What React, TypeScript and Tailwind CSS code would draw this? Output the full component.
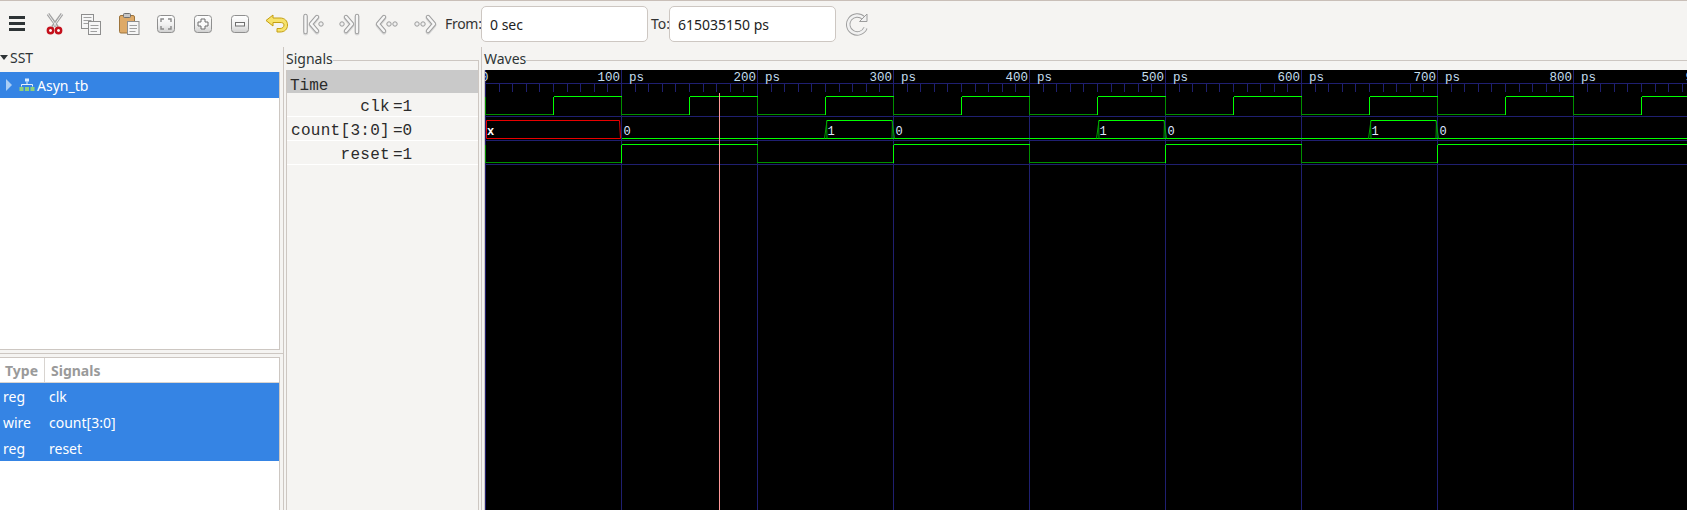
const ORIGIN = 0.5;
const PS100 = 136;
const X = (ps: number) => ORIGIN + (ps / 100) * PS100;

// local y inside the wave svg (global y - 70)
const rows = {
  clk: { hi: 26.5, lo: 44.5 },
  count: { hi: 50.5, lo: 68.5 },
  reset: { hi: 74.5, lo: 92.5 },
};

const LINE = "#1f1f70";
const HI = "#00ff00";
const LO = "#008f00";

function Bit({ start, edges, hi, lo }: { start: 0 | 1; edges: number[]; hi: number; lo: number }) {
  const stops = [0, ...edges, 900];
  return (
    <g shapeRendering="crispEdges">
      {stops.slice(0, -1).map((from, i) => {
        const level = i % 2 === 0 ? start : 1 - start;
        const x1 = X(from);
        const x2 = X(stops[i + 1]);
        return (
          <g key={from}>
            <line x1={x1} x2={x2} y1={level ? hi : lo} y2={level ? hi : lo} stroke={level ? HI : LO} />
            {i > 0 && <line x1={x1} x2={x1} y1={hi} y2={lo} stroke={level ? HI : LO} />}
          </g>
        );
      })}
      <line x1={X(0)} x2={X(0)} y1={hi} y2={lo} stroke={LO} />
    </g>
  );
}

function Pulse({ ps }: { ps: number }) {
  const a = X(ps);
  const b = X(ps + 50);
  const { hi, lo } = rows.count;
  return (
    <g>
      <path d={`M${a - 1} ${lo}L${a + 1.5} ${hi}M${a + 1.5} ${lo}L${a + 1} ${hi}`} stroke="#00a000" fill="none" />
      <path d={`M${b + 1} ${lo}L${b - 1.5} ${hi}M${b - 1.5} ${lo}L${b - 1} ${hi}`} stroke="#00a000" fill="none" />
      <line x1={a + 1.5} x2={b - 1.5} y1={hi} y2={hi} stroke={HI} shapeRendering="crispEdges" />
      <text x={a + 2} y={65} fontSize="12" fill="#dfe8ff" fontFamily="'Liberation Mono', monospace">1</text>
      <text x={b + 2} y={65} fontSize="12" fill="#dfe8ff" fontFamily="'Liberation Mono', monospace">0</text>
    </g>
  );
}

function WaveView() {
  const ticks = Array.from({ length: 90 }, (_, i) => i * 10);
  const hundreds = [100, 200, 300, 400, 500, 600, 700, 800, 900];
  return (
    <svg viewBox="0 0 1202 440" width="1202" height="440" className="block bg-black">
      <g shapeRendering="crispEdges">
        {[13.5, 46.5, 70.5, 94.5].map((y) => (
          <line key={y} x1="0" x2="1202" y1={y} y2={y} stroke={LINE} />
        ))}
        {ticks.map((t) => (
          <line key={t} x1={X(t)} x2={X(t)} y1={t % 100 === 0 ? 0 : 14} y2={t % 100 === 0 ? 440 : 22} stroke={LINE} />
        ))}
      </g>
      <g fontFamily="'Liberation Mono', monospace" fontSize="12.5" fill="#c4deee">
        <text x="-4" y="11">0</text>
        {hundreds.map((h) => (
          <g key={h}>
            <text x={X(h) - 1.5} y="11" textAnchor="end">{h}</text>
            <text x={X(h) + 7.5} y="11">ps</text>
          </g>
        ))}
      </g>

      <Bit start={0} hi={rows.clk.hi} lo={rows.clk.lo} edges={[50, 100, 150, 200, 250, 300, 350, 400, 450, 500, 550, 600, 650, 700, 750, 800, 850]} />

      <path d={`M${X(0) + 1} ${rows.count.hi}H${X(100) - 2}L${X(100) - 1} ${rows.count.lo}H${X(0) + 1}Z`} fill="none" stroke="#e80000" />
      <text x="2" y="65" fontSize="12" fontWeight="700" fill="#ffffff" fontFamily="'Liberation Mono', monospace">x</text>
      <line x1={X(100)} x2="1202" y1={rows.count.lo} y2={rows.count.lo} stroke={HI} shapeRendering="crispEdges" />
      <text x={X(100) + 2} y="65" fontSize="12" fill="#dfe8ff" fontFamily="'Liberation Mono', monospace">0</text>
      <Pulse ps={250} />
      <Pulse ps={450} />
      <Pulse ps={650} />

      <Bit start={0} hi={rows.reset.hi} lo={rows.reset.lo} edges={[100, 200, 300, 400, 500, 600, 700]} />

      <line x1="234.5" x2="234.5" y1="23" y2="440" stroke="#ff9a9a" shapeRendering="crispEdges" />
    </svg>
  );
}

function ToolIcon({ children }: { children: React.ReactNode }) {
  return (
    <button className="w-[36px] h-[36px] shrink-0">
      <svg viewBox="0 0 36 36" width="36" height="36" className="block">
        {children}
      </svg>
    </button>
  );
}

function Tube({ d }: { d: string }) {
  return (
    <g fill="none" strokeLinecap="round" strokeLinejoin="round">
      <path d={d} stroke="#d8d8d8" strokeWidth="5" transform="translate(0 1)" />
      <path d={d} stroke="#a0a0a0" strokeWidth="4.4" />
      <path d={d} stroke="#f6f6f6" strokeWidth="2.4" />
    </g>
  );
}

function Dot({ x, y = 18 }: { x: number; y?: number }) {
  return <circle cx={x} cy={y} r="2.2" fill="#f0f0f0" stroke="#9b9b9b" />;
}

function KeyCap({ id, children }: { id: string; children: React.ReactNode }) {
  return (
    <>
      <defs>
        <linearGradient id={id} x1="0" y1="0" x2="0" y2="1">
          <stop offset="0" stopColor="#ffffff" />
          <stop offset="0.55" stopColor="#f0f0f0" />
          <stop offset="1" stopColor="#cfcfcf" />
        </linearGradient>
      </defs>
      <rect x="9.5" y="9.5" width="17" height="17" rx="3" fill={`url(#${id})`} stroke="#8f8f8f" />
      {children}
    </>
  );
}

function Toolbar() {
  return (
    <div className="h-[47px] shrink-0 border-t border-[#c9bfb8] flex items-center">
      <div className="flex gap-[1px] items-center">
        <ToolIcon>
          <path d="M9 11.5H25M9 17.5H25M9 23.5H25" stroke="#2e3436" strokeWidth="3.2" />
        </ToolIcon>
        <ToolIcon>
          <path d="M11 8L20.5 21M25 8L15.5 21" stroke="#a3a3a3" strokeWidth="3" />
          <path d="M11 8L20 21M25 8L16 21" stroke="#ececec" strokeWidth="1" />
          <circle cx="13.5" cy="24.5" r="2.7" fill="#fff" stroke="#c4101c" strokeWidth="2.4" />
          <circle cx="21.5" cy="24.5" r="2.7" fill="#fff" stroke="#c4101c" strokeWidth="2.4" />
        </ToolIcon>
        <ToolIcon>
          <rect x="7.5" y="8.5" width="12" height="14" fill="#f6f6f6" stroke="#8e8e8e" />
          <path d="M9.5 11.5H17.5M9.5 14.5H17.5M9.5 17.5H16" stroke="#a0a0a0" />
          <rect x="14.5" y="15.5" width="12" height="13" fill="#f6f6f6" stroke="#8e8e8e" />
          <path d="M16.5 19.5H24.5M16.5 22.5H24.5M16.5 25.5H23" stroke="#a0a0a0" />
        </ToolIcon>
        <ToolIcon>
          <rect x="8.5" y="9.5" width="15" height="17.5" rx="1.5" fill="#deaa68" stroke="#9d743c" />
          <rect x="12.5" y="7.5" width="7" height="4" rx="1" fill="#c6c6c6" stroke="#6f6f6f" />
          <rect x="16.5" y="15.5" width="11.5" height="13" fill="#f6f6f6" stroke="#8e8e8e" />
          <path d="M18.5 19.5H26M18.5 22.5H26M18.5 25.5H24.5" stroke="#a0a0a0" />
        </ToolIcon>
        <ToolIcon>
          <KeyCap id="capFit">
            <path d="M13 16V13H16M20 13H23V16M13 20V23H16M20 23H23V20" fill="none" stroke="#8a8a8a" strokeWidth="1.4" />
          </KeyCap>
        </ToolIcon>
        <ToolIcon>
          <KeyCap id="capPlus">
            <path d="M16 13H20V16H23V20H20V23H16V20H13V16H16Z" fill="#fafafa" stroke="#6f6f6f" />
          </KeyCap>
        </ToolIcon>
        <ToolIcon>
          <KeyCap id="capMinus">
            <rect x="13.5" y="16.5" width="9" height="3.5" fill="#fafafa" stroke="#6f6f6f" />
          </KeyCap>
        </ToolIcon>
        <ToolIcon>
          <path d="M7 14.5L14 9V12H21C26 12 28.5 15 28.5 19C28.5 23 26 26 21 26H18V22.5H21C23.5 22.5 25 21 25 19C25 17.2 23.5 16.5 21 16.5H14V20Z" fill="#f7e26b" stroke="#c49f12" strokeLinejoin="round" />
        </ToolIcon>
        <ToolIcon>
          <Tube d="M9.5 10V26" />
          <Tube d="M21 11L15 18L21 25" />
          <Dot x={25} />
        </ToolIcon>
        <ToolIcon>
          <Dot x={9} />
          <Tube d="M13 11L19 18L13 25" />
          <Tube d="M24 10V26" />
        </ToolIcon>
        <ToolIcon>
          <Tube d="M14 11L8 18L14 25" />
          <Dot x={19} />
          <Dot x={25} />
        </ToolIcon>
        <ToolIcon>
          <Dot x={10} />
          <Dot x={16} />
          <Tube d="M21 11L27 18L21 25" />
        </ToolIcon>
      </div>
      <span className="ml-[2px] w-[36px] text-[#333] leading-none whitespace-nowrap tracking-[-0.3px]">From:</span>
      <div className="w-[167px] h-[36px] rounded-[5px] border border-[#cdc7c2] bg-white flex items-center pl-[8px] text-[#222]">0 sec</div>
      <span className="ml-[3px] w-[18px] text-[#333] leading-none">To:</span>
      <div className="w-[167px] h-[36px] rounded-[5px] border border-[#cdc7c2] bg-white flex items-center pl-[8px] text-[#222]">615035150 ps</div>
      <svg viewBox="0 0 24 24" width="24" height="24" className="ml-[9px] block">
        <path d="M18.5 6A9 9 0 1 0 20.5 16" fill="none" stroke="#9c9c9c" strokeWidth="4.4" />
        <path d="M18.5 6A9 9 0 1 0 20.5 16" fill="none" stroke="#f1f1f1" strokeWidth="2.6" />
        <path d="M14.5 9.5H22V2Z" fill="#f1f1f1" stroke="#9c9c9c" strokeLinejoin="round" />
      </svg>
    </div>
  );
}

function SidePane() {
  return (
    <div className="w-[284px] shrink-0 border-r border-[#cdc7c2] flex flex-col">
      <div className="h-[25px] flex items-center pb-[4px]">
        <span className="w-0 h-0 border-x-[4.5px] border-x-transparent border-t-[5px] border-t-[#2e3436] mr-[2px]"></span>
        <span className="text-[#2e3436]">SST</span>
      </div>
      <div className="h-[278px] w-[280px] bg-white border-r border-b border-[#cdc7c2]">
        <div className="h-[26px] bg-[#3584e4] flex items-center text-white">
          <span className="ml-[6px] w-0 h-0 border-y-[6px] border-y-transparent border-l-[6px] border-l-[#a9cdf5]"></span>
          <svg viewBox="0 0 16 14" width="16" height="14" className="ml-[7px] mr-[2px] block">
            <rect x="6" y="0.5" width="4" height="3" fill="#d9ecff" />
            <path d="M8 3.5V6M2.5 8.5V6.5H13.5V8.5" fill="none" stroke="#e7f1fb" />
            <rect x="0.5" y="9" width="4" height="4" fill="#8ed07a" />
            <rect x="6" y="9" width="4" height="4" fill="#8ed07a" />
            <rect x="11.5" y="9" width="4" height="4" fill="#8ed07a" />
          </svg>
          <span>Asyn_tb</span>
        </div>
      </div>
      <div className="h-[3px]"></div>
      <div className="h-[1px] bg-[#cdc7c2]"></div>
      <div className="h-[3px]"></div>
      <div className="flex-1 w-[280px] bg-white border-t border-r border-[#cdc7c2]">
        <div className="h-[25px] flex items-center border-b border-[#d8d4d0] font-bold text-[#9a9a9a]">
          <span className="w-[45px] h-full flex items-center pl-[5px] border-r border-[#d8d4d0]">Type</span>
          <span className="pl-[6px]">Signals</span>
        </div>
        {[
          ["reg", "clk"],
          ["wire", "count[3:0]"],
          ["reg", "reset"],
        ].map(([type, name]) => (
          <div key={name} className="h-[26px] bg-[#3584e4] text-white flex items-center">
            <span className="w-[49px] pl-[3px]">{type}</span>
            <span>{name}</span>
          </div>
        ))}
      </div>
    </div>
  );
}

function SignalRow({ name, value }: { name: string; value: string }) {
  return (
    <div className="h-[24px] border-b border-white flex items-center pt-[4px]">
      <span className="w-[103px] text-right whitespace-nowrap tracking-[0.3px]">{name}</span>
      <span className="ml-[3px]">={value}</span>
    </div>
  );
}

function SignalsPane() {
  return (
    <div className="w-[198px] shrink-0 border-r border-[#cdc7c2] pl-[2px] pr-[2px] flex flex-col">
      <div className="h-[23px] flex shrink-0">
        <span className="pt-[2px] text-[#2e3436] leading-[20px]">Signals</span>
        <div className="flex-1 mt-[13px] border-t border-r border-[#cdc7c2]"></div>
      </div>
      <div className="flex-1 border-x border-[#cdc7c2] font-['Liberation_Mono',monospace] text-[16px] text-[#2b2b2b]">
        <div className="h-[23px] bg-[#c9c9c9] flex items-center pl-[3px] pt-[8px]">Time</div>
        <SignalRow name="clk" value="1" />
        <SignalRow name="count[3:0]" value="0" />
        <SignalRow name="reset" value="1" />
      </div>
    </div>
  );
}

function WavesPane() {
  return (
    <div className="flex-1 min-w-0 pl-[2px] flex flex-col">
      <div className="h-[23px] flex shrink-0">
        <span className="pt-[2px] text-[#2e3436] leading-[20px]">Waves</span>
        <div className="flex-1 mt-[13px] border-t border-[#cdc7c2]"></div>
      </div>
      <div className="flex-1 border-l border-[#cdc7c2] overflow-hidden">
        <WaveView />
      </div>
    </div>
  );
}

export default function App() {
  return (
    <div className="h-screen w-full overflow-hidden bg-[#f5f4f2] flex flex-col font-['Noto_Sans',sans-serif] text-[14px]">
      <Toolbar />
      <div className="flex-1 min-h-0 flex">
        <SidePane />
        <SignalsPane />
        <WavesPane />
      </div>
    </div>
  );
}
